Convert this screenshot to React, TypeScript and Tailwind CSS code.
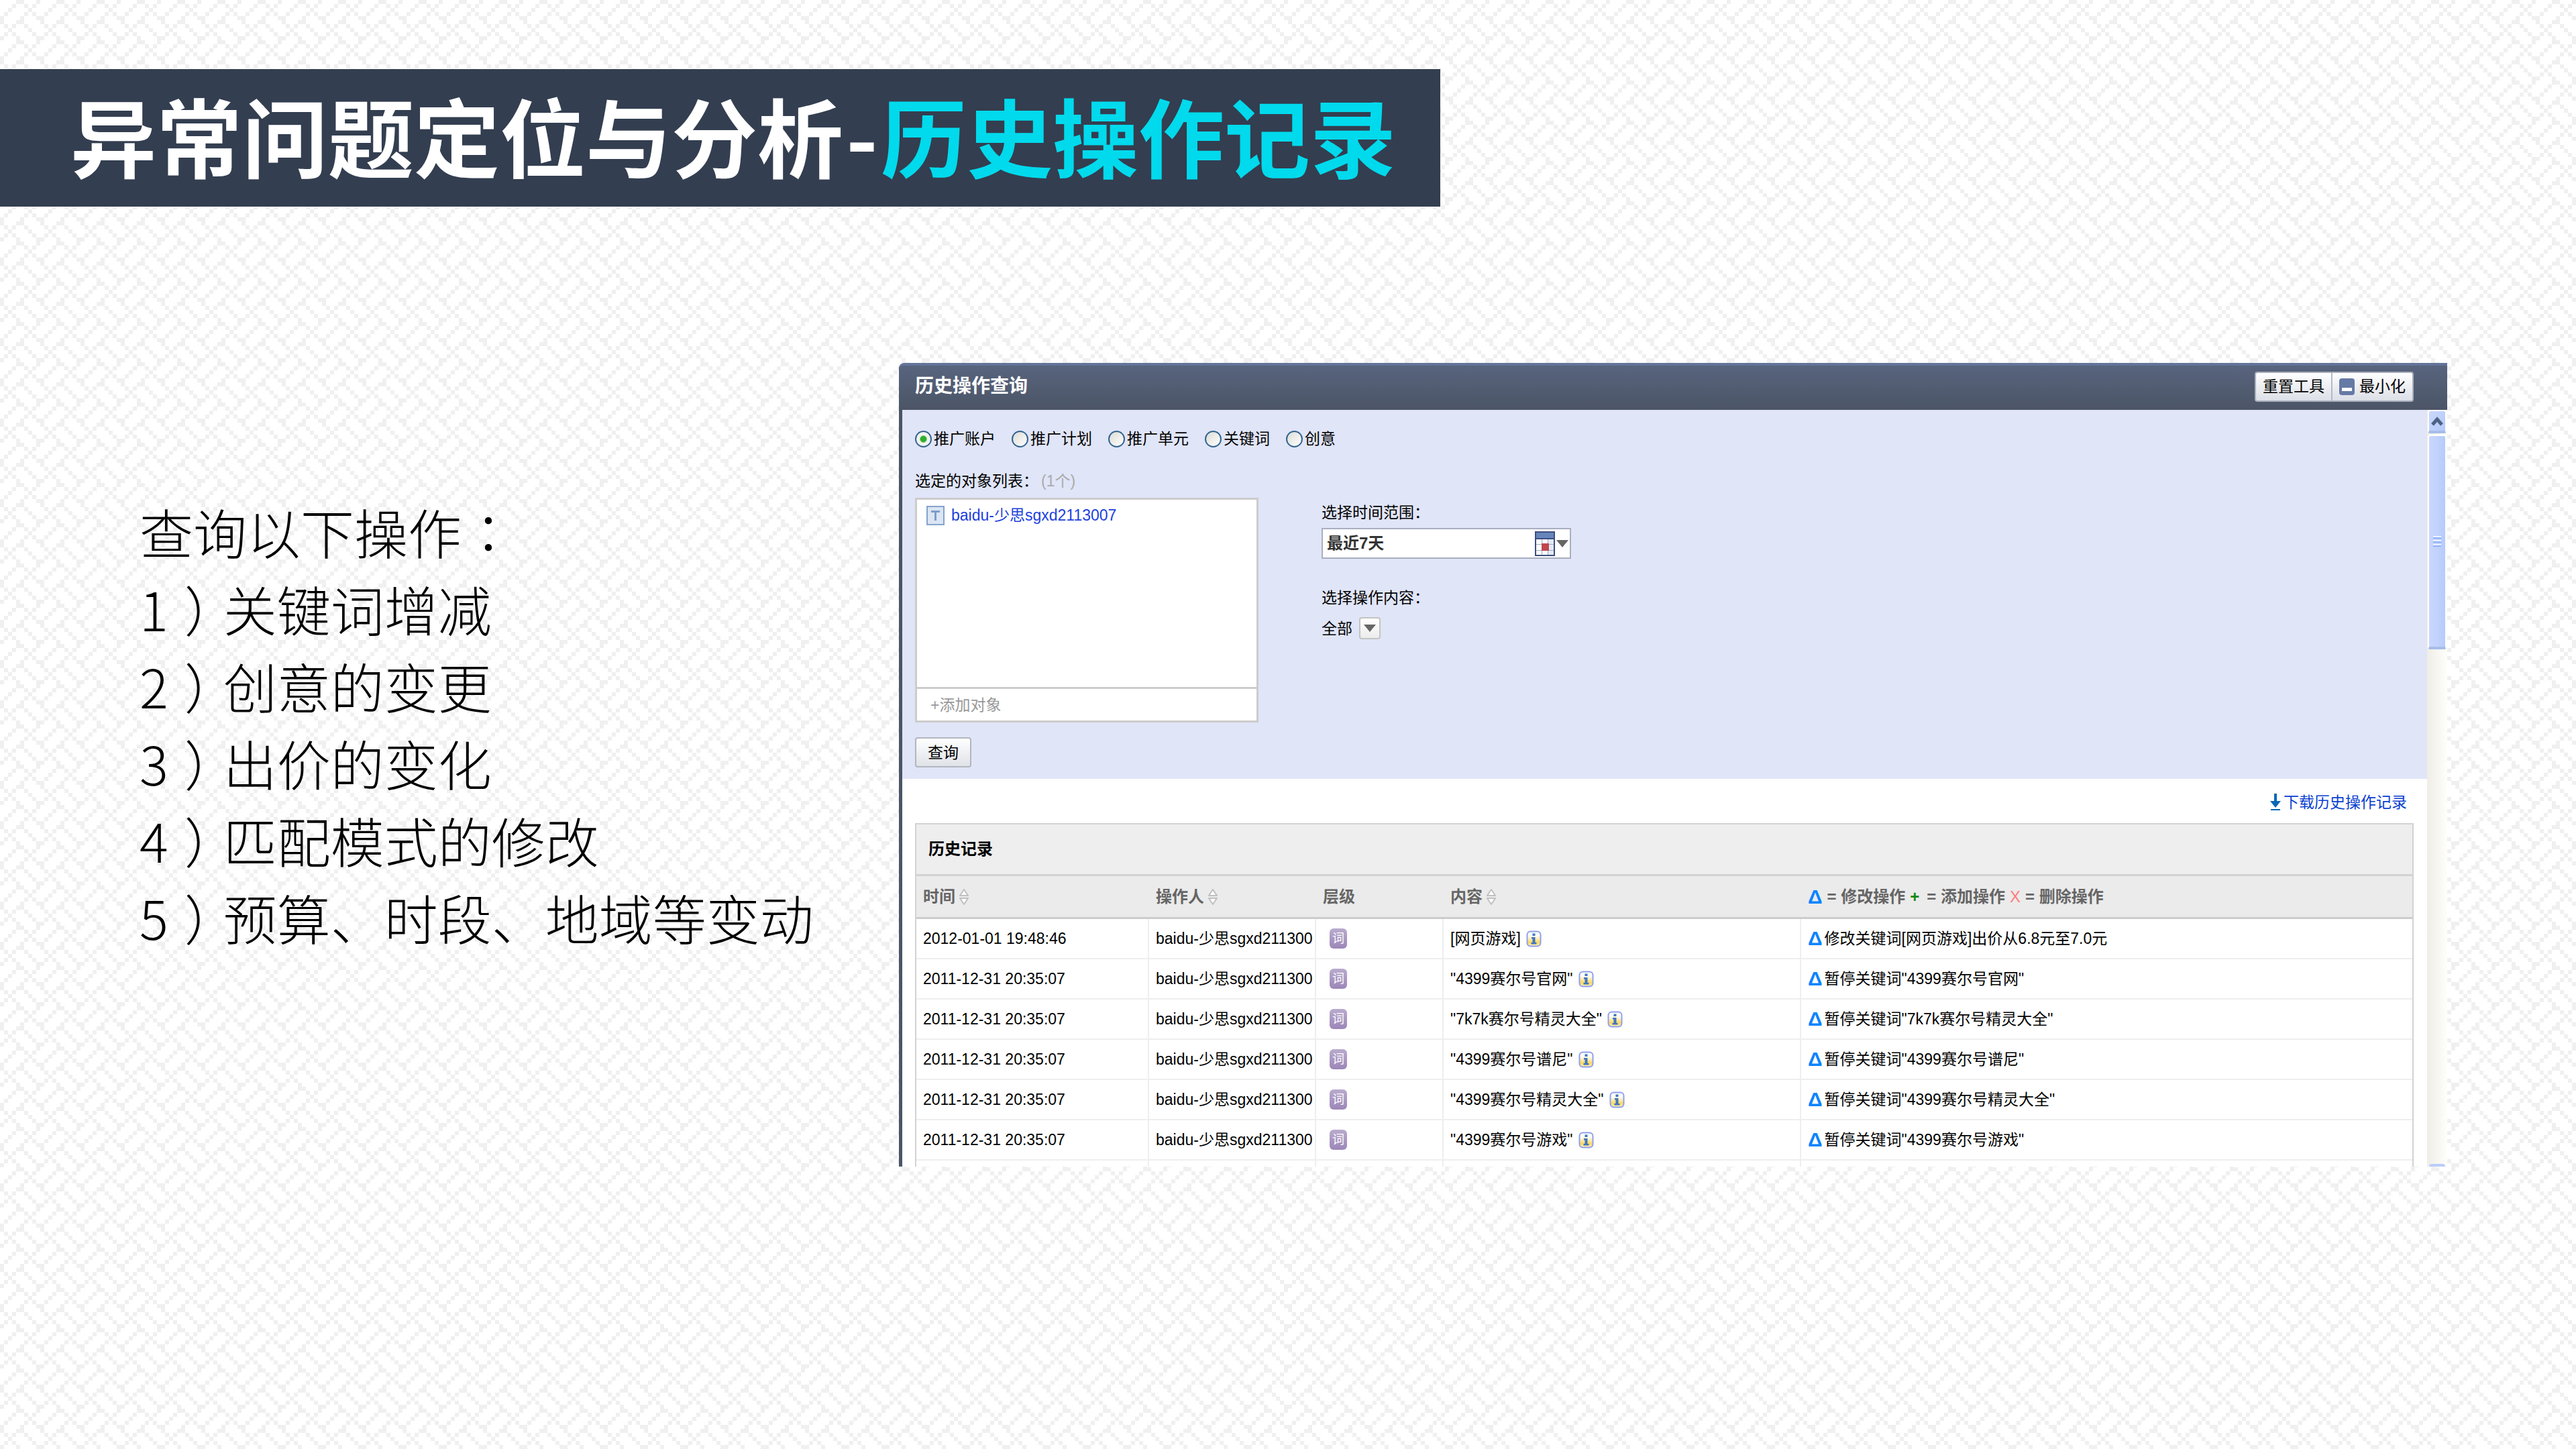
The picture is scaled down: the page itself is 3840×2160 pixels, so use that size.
import React, { useState } from 'react';

// dark cells of the 10x10 woven background tile
const weave = [
  [4, 5, 9],
  [3, 6, 8],
  [2, 7],
  [1, 6, 8],
  [0, 5, 9],
  [0, 4, 5],
  [1, 3, 6],
  [2, 7],
  [1, 3, 8],
  [0, 4, 9],
];

const weaveSvg = `<svg xmlns="http://www.w3.org/2000/svg" width="60" height="60" shape-rendering="crispEdges"><rect width="60" height="60" fill="#fff"/>${weave
  .map((row, y) =>
    row
      .map((x) => `<rect x="${x * 6}" y="${y * 6}" width="6" height="6" fill="#f0f0f0"/>`)
      .join('')
  )
  .join('')}</svg>`;

const steps = ['关键词增减', '创意的变更', '出价的变化', '匹配模式的修改', '预算、时段、地域等变动'];

const levels = ['推广账户', '推广计划', '推广单元', '关键词', '创意'];

const records = [
  { time: '2012-01-01 19:48:46', content: '[网页游戏]', action: '修改关键词[网页游戏]出价从6.8元至7.0元' },
  { time: '2011-12-31 20:35:07', content: '"4399赛尔号官网"', action: '暂停关键词"4399赛尔号官网"' },
  { time: '2011-12-31 20:35:07', content: '"7k7k赛尔号精灵大全"', action: '暂停关键词"7k7k赛尔号精灵大全"' },
  { time: '2011-12-31 20:35:07', content: '"4399赛尔号谱尼"', action: '暂停关键词"4399赛尔号谱尼"' },
  { time: '2011-12-31 20:35:07', content: '"4399赛尔号精灵大全"', action: '暂停关键词"4399赛尔号精灵大全"' },
  { time: '2011-12-31 20:35:07', content: '"4399赛尔号游戏"', action: '暂停关键词"4399赛尔号游戏"' },
];

const SortIcon = () => (
  <svg width="14" height="24" viewBox="0 0 14 24" className="shrink-0">
    <path d="M7 1 13 10H1Z" fill="#fff" stroke="#c0c0c0" strokeWidth="2" />
    <path d="M7 23 13 14H1Z" fill="#fff" stroke="#c0c0c0" strokeWidth="2" />
  </svg>
);

const InfoIcon = () => (
  <svg width="23" height="25" viewBox="0 0 23 25" className="shrink-0">
    <defs>
      <linearGradient id="info" x1="0" y1="0" x2="0" y2="1">
        <stop offset="0.3" stopColor="#fdfdf6" />
        <stop offset="0.75" stopColor="#ffd65e" />
        <stop offset="1" stopColor="#fff3c4" />
      </linearGradient>
    </defs>
    <rect x="1.5" y="1.5" width="20" height="22" rx="5" fill="url(#info)" stroke="#8ea0ee" strokeWidth="2" />
    <path d="M9.5 4.5h4v3.500h-4zM8 10h5.500v8h2v2.500H7.500V18h2v-5.500H8z" fill="#3f76c0" />
  </svg>
);

const CalendarIcon = () => (
  <svg width="30" height="37" viewBox="0 0 30 37" className="shrink-0">
    <rect x="1" y="1" width="28" height="35" fill="#9fabc6" stroke="#3d4f80" strokeWidth="2" />
    <rect x="2" y="2" width="26" height="9" fill="#6685bb" />
    <rect x="2" y="10" width="26" height="2" fill="#3d4f80" />
    {[12, 20, 29].map((y) =>
      [2, 11, 20].map((x) => (
        <rect key={`${x}-${y}`} x={x} y={y} width="8" height={y === 12 ? 7 : y === 20 ? 8 : 6} fill={x === 20 ? '#e3ebf6' : '#fff'} />
      ))
    )}
    <rect x="10" y="18" width="11" height="11" fill="#c0474d" />
  </svg>
);

const DownArrow = () => (
  <svg width="18" height="11" viewBox="0 0 18 11" className="shrink-0">
    <path d="M0 0h18L9 11z" fill="#666" />
  </svg>
);

const DownloadIcon = () => (
  <svg width="16" height="26" viewBox="0 0 16 26" className="shrink-0">
    <path d="M6 0h4v11h6l-8 10-8-10h6z" fill="#0a66b8" />
    <path d="M1 23h14v2H1z" fill="#0a66b8" />
  </svg>
);

const Delta = () => <span className="text-[30px] leading-none font-bold text-[#0a84ff]">Δ</span>;

const ScrollBar = () => (
  <div className="flex w-[30px] shrink-0 flex-col items-center bg-gradient-to-r from-[#efede6] to-[#fefefb]">
    <button
      aria-label="向上滚动"
      className="flex h-[35px] w-7 items-center justify-center rounded border-2 border-b-4 border-white border-b-[#a5bde8] bg-gradient-to-br from-[#cbd8fb] to-[#b3c9fa]"
    >
      <svg width="18" height="14" viewBox="0 0 18 14">
        <path d="M2 12l7-8 7 8" fill="none" stroke="#4d6185" strokeWidth="5" />
      </svg>
    </button>
    <div className="mt-0.5 flex h-[320px] w-7 flex-col items-center justify-center gap-0.5 rounded border-2 border-b-4 border-white border-b-[#a5bde8] bg-gradient-to-r from-[#c9d6fc] via-[#c2d2fd] to-[#b3cbfb]">
      <div className="h-1 w-3 border-t-2 border-b-2 border-t-[#eef4fe] border-b-[#8cb0f8]" />
      <div className="h-1 w-3 border-t-2 border-b-2 border-t-[#eef4fe] border-b-[#8cb0f8]" />
      <div className="h-1 w-3 border-t-2 border-b-2 border-t-[#eef4fe] border-b-[#8cb0f8]" />
    </div>
    <div className="mt-auto h-1 w-6 rounded-t bg-[#b9cdfa]" />
  </div>
);

const App = () => {
  const [level, setLevel] = useState(levels[0]);

  return (
    <main
      lang="zh-CN"
      className="min-h-screen pt-[103px] text-black font-['Liberation_Sans','Noto_Sans_CJK_SC',sans-serif]"
      style={{ backgroundImage: `url("data:image/svg+xml,${encodeURIComponent(weaveSvg)}")` }}
    >
      <h1 className="flex h-[205px] w-fit items-center bg-[#333e50] pr-[66px] pb-2.5 pl-[105px] text-[128px] leading-none font-bold whitespace-nowrap text-white font-['Noto_Sans_CJK_SC',sans-serif]">
        <span>异常问题定位与分析</span>
        <span className="w-14 text-center">-</span>
        <span className="text-[#00daec]">历史操作记录</span>
      </h1>

      <div className="mt-[233px] flex items-start pr-48">
        <section className="w-[1340px] shrink-0 pt-[193px] pl-52 text-[80px] leading-[115px] font-light whitespace-nowrap font-['Noto_Sans_CJK_SC',sans-serif]">
          <p>
            查询以下操作<span className="font-['Noto_Sans_CJK_TC',sans-serif]" lang="zh-TW">：</span>
          </p>
          <ol>
            {steps.map((step, i) => (
              <li key={step} className="flex">
                <span>{i + 1}</span>
                <span className="pr-[18px] pl-6 [font-feature-settings:'halt']">）</span>
                <span>{step}</span>
              </li>
            ))}
          </ol>
        </section>

        <section className="min-w-0 flex-1 text-[23px] leading-[30px]">
          <header className="flex h-[70px] items-center justify-between rounded-tl-lg border-t-4 border-[#64739a] bg-gradient-to-b from-[#58647e] to-[#4b5566] pr-[50px] pb-1 pl-6">
            <h2 className="text-[28px] font-bold text-white">历史操作查询</h2>
            <div className="flex h-[45px] rounded border-2 border-[#a9afbb] bg-gradient-to-b from-white to-[#dcdfe7]">
              <button className="border-r-2 border-[#b4bac6] px-2.5">重置工具</button>
              <button className="flex items-center gap-[7px] px-2.5">
                <svg width="23" height="25" viewBox="0 0 23 25">
                  <rect width="23" height="25" rx="4" fill="#667aa6" />
                  <rect x="4" y="14" width="15" height="5" fill="#fff" />
                </svg>
                最小化
              </button>
            </div>
          </header>

          <div className="flex border-l-[5px] border-[#4b5566] bg-white">
            <div className="min-w-0 flex-1">
              <form className="bg-[#e0e5f8] pt-7 pb-[17px] pl-[19px]" onSubmit={(e) => e.preventDefault()}>
                <div className="flex gap-6">
                  {levels.map((name) => (
                    <label key={name} className="flex items-center gap-[3px]">
                      <input
                        type="radio"
                        name="level"
                        checked={level === name}
                        onChange={() => setLevel(name)}
                        className="size-[25px] appearance-none rounded-full border-2 border-[#33658f] bg-gradient-to-br from-[#dcdcd6] to-white checked:bg-[radial-gradient(circle,#2fae2a_0_4px,#f4f4f0_6px)]"
                      />
                      {name}
                    </label>
                  ))}
                </div>

                <div className="mt-[33px]">
                  选定的对象列表：<span className="pl-1 text-[#aaa]">(1个)</span>
                </div>
                <div className="mt-2.5 flex gap-[94px]">
                  <div className="flex h-[335px] w-[512px] flex-col border-[3px] border-[#ccc] bg-white">
                    <div className="flex flex-1 items-start gap-2.5 px-3.5 pt-2">
                      <svg width="27" height="29" viewBox="0 0 27 29" className="mt-px">
                        <rect x="1" y="1" width="25" height="27" fill="#dbe5f3" stroke="#86a3cc" strokeWidth="2" />
                        <path d="M7 7h13v3h-5v12h-3V10H7z" fill="#7e9cc8" />
                      </svg>
                      <a href="#account" className="text-[#1c3fdc]">baidu-少思sgxd2113007</a>
                    </div>
                    <button type="button" className="h-[50px] border-t-[3px] border-[#ccc] px-5 text-left text-[#999]">
                      +添加对象
                    </button>
                  </div>

                  <div className="pt-[7px]">
                    <label htmlFor="range" className="block">选择时间范围：</label>
                    <div className="mt-2 flex h-[46px] w-[372px] items-center gap-0.5 border-2 border-[#a9afc0] bg-white pr-0.5">
                      <select id="range" className="h-full min-w-0 flex-1 appearance-none pl-1.5 text-[24px] font-bold text-[#333]">
                        <option>最近7天</option>
                      </select>
                      <CalendarIcon />
                      <DownArrow />
                    </div>
                    <div className="mt-[43px]">选择操作内容：</div>
                    <div className="mt-3.5 flex items-center gap-2.5">
                      全部
                      <button
                        type="button"
                        aria-label="选择操作内容"
                        className="flex h-[33px] w-8 items-center justify-center rounded border-2 border-[#c3c3c3] bg-gradient-to-b from-white to-[#ececec]"
                      >
                        <DownArrow />
                      </button>
                    </div>
                  </div>
                </div>

                <button className="mt-[22px] h-[45px] w-[84px] rounded border-2 border-[#b2b6be] bg-gradient-to-b from-white to-[#dfe2e8]">
                  查询
                </button>
              </form>

              <div className="flex h-[66px] items-center justify-end pt-1 pr-[30px]">
                <a href="#download" className="flex items-center gap-1 text-[#0a3fd0]">
                  <DownloadIcon />
                  下载历史操作记录
                </a>
              </div>

              <div className="mr-5 ml-[19px] border-x-2 border-t-2 border-[#d2d2d2]">
                <h3 className="flex h-[77px] items-center border-b-[3px] border-[#d2d2d2] bg-[#eee] pl-[18px] text-[24px] font-bold">
                  历史记录
                </h3>
                <table className="w-full table-fixed border-separate border-spacing-0 text-left whitespace-nowrap">
                  <colgroup>
                    <col className="w-[347px]" />
                    <col className="w-[249px]" />
                    <col className="w-[190px]" />
                    <col className="w-[533px]" />
                    <col />
                  </colgroup>
                  <thead className="text-[24px] text-[#666]">
                    <tr className="h-[64px] bg-[#ebebeb]">
                      <th className="border-b-[3px] border-[#ccc] pl-2.5 font-bold">
                        <div className="flex items-center gap-1.5">时间<SortIcon /></div>
                      </th>
                      <th className="border-b-[3px] border-[#ccc] pl-2.5 font-bold">
                        <div className="flex items-center gap-1.5">操作人<SortIcon /></div>
                      </th>
                      <th className="border-b-[3px] border-[#ccc] pl-2.5 font-bold">层级</th>
                      <th className="border-b-[3px] border-[#ccc] pl-2.5 font-bold">
                        <div className="flex items-center gap-1.5">内容<SortIcon /></div>
                      </th>
                      <th className="border-b-[3px] border-[#ccc] pl-2.5 font-bold">
                        <div className="flex items-center gap-[7px]">
                          <Delta />
                          <span>= 修改操作</span>
                          <span className="text-[#128a12]">+</span>
                          <span className="ml-1">= 添加操作</span>
                          <span className="font-normal text-[#ff7b7b]">X</span>
                          <span>= 删除操作</span>
                        </div>
                      </th>
                    </tr>
                  </thead>
                  <tbody>
                    {records.map((record) => (
                      <tr key={record.action} className="h-[60px]">
                        <td className="border-r-2 border-b-2 border-[#eee] pl-2.5">{record.time}</td>
                        <td className="overflow-hidden border-r-2 border-b-2 border-[#eee] pl-2.5">
                          baidu-少思sgxd211300
                        </td>
                        <td className="border-r-2 border-b-2 border-[#eee] pl-5">
                          <span className="flex h-[30px] w-[26px] items-center justify-center rounded-md bg-gradient-to-b from-[#b9abcd] to-[#9c86b8] text-[18px] leading-none text-white">
                            词
                          </span>
                        </td>
                        <td className="border-r-2 border-b-2 border-[#eee] pl-2.5">
                          <div className="flex items-center gap-2">
                            {record.content}
                            <InfoIcon />
                          </div>
                        </td>
                        <td className="border-b-2 border-[#eee] pl-2.5">
                          <div className="flex items-center gap-[3px]">
                            <Delta />
                            {record.action}
                          </div>
                        </td>
                      </tr>
                    ))}
                    <tr className="h-[9px]">
                      <td className="border-r-2 border-[#eee]" />
                      <td className="border-r-2 border-[#eee]" />
                      <td className="border-r-2 border-[#eee]" />
                      <td className="border-r-2 border-[#eee]" />
                      <td />
                    </tr>
                  </tbody>
                </table>
              </div>
            </div>
            <ScrollBar />
          </div>
        </section>
      </div>
    </main>
  );
};

export default App;
